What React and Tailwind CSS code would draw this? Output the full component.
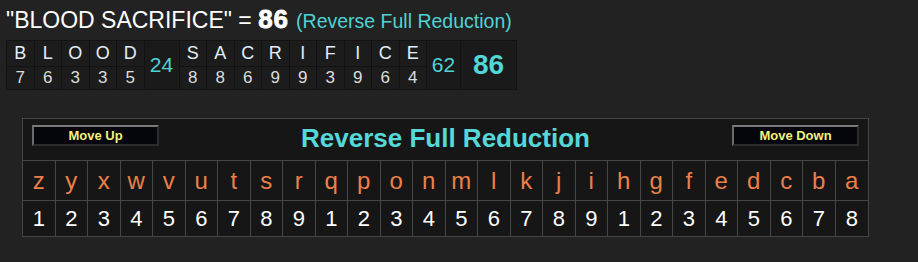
import React from "react";

const FONT = { fontFamily: '"Liberation Sans", Arial, sans-serif' };

const words = [
  { letters: [["B", 7], ["L", 6], ["O", 3], ["O", 3], ["D", 5]], total: 24 },
  {
    letters: [["S", 8], ["A", 8], ["C", 6], ["R", 9], ["I", 9], ["F", 3], ["I", 9], ["C", 6], ["E", 4]],
    total: 62,
  },
];

const cipher = "zyxwvutsrqponmlkjihgfedcba".split("");
const values = [1, 2, 3, 4, 5, 6, 7, 8, 9, 1, 2, 3, 4, 5, 6, 7, 8, 9, 1, 2, 3, 4, 5, 6, 7, 8];

function Breakdown() {
  return (
    <div className="ml-[6px] flex w-fit gap-px bg-[#121212] p-px">
      {words.map((w, wi) => (
        <React.Fragment key={wi}>
          {w.letters.map(([l, v], i) => (
            <div key={i} className="flex w-[26.5px] flex-col gap-px">
              <div className="flex h-[25px] items-center justify-center bg-[#1c1c1c] text-[18px] text-[#e2eefa]">
                {l}
              </div>
              <div className="flex h-[22px] items-center justify-center bg-[#1c1c1c] text-[17px] text-[#dcdcdc]">
                {v}
              </div>
            </div>
          ))}
          <div
            className={`flex ${wi === 0 ? "w-[34px]" : "w-[33px]"} items-center justify-center bg-[#1a1a1a] text-[21px] text-[#4fd3d3]`}
          >
            {w.total}
          </div>
        </React.Fragment>
      ))}
      <div className="flex w-[55px] items-center justify-center bg-[#1a1a1a] text-[28px] font-bold text-[#52d6d6]">
        86
      </div>
    </div>
  );
}

function MoveButton({ children }) {
  return (
    <button
      type="button"
      className="mt-[6px] flex h-[21px] w-[127px] items-center justify-center border-2 border-t-[#7a7a7a] border-l-[#6a6a6a] border-r-[#2c2c2c] border-b-[#2c2c2c] bg-[#05050c] text-[13px] font-bold text-[#f2f27c]"
    >
      {children}
    </button>
  );
}

function CipherTable() {
  return (
    <div className="ml-[22px] mt-[28px] w-[847px] border border-[#464646] bg-[#161616]">
      <div className="flex h-[42px] items-start border-b border-[#464646] px-[9px]">
        <MoveButton>Move Up</MoveButton>
        <div className="flex-1 pt-[3px] text-center text-[26px] font-bold leading-[32px] text-[#55d8d8]">
          Reverse Full Reduction
        </div>
        <MoveButton>Move Down</MoveButton>
      </div>
      <div className="grid grid-cols-[repeat(26,minmax(0,1fr))] border-b border-[#464646]">
        {cipher.map((c, i) => (
          <div
            key={i}
            className={`flex h-[39px] items-center justify-center text-[24px] text-[#ec8048] ${i < 25 ? "border-r border-[#464646]" : ""}`}
          >
            {c}
          </div>
        ))}
      </div>
      <div className="grid grid-cols-[repeat(26,minmax(0,1fr))]">
        {values.map((v, i) => (
          <div
            key={i}
            className={`flex h-[35px] items-center justify-center text-[22px] text-white ${i < 25 ? "border-r border-[#464646]" : ""}`}
          >
            {v}
          </div>
        ))}
      </div>
    </div>
  );
}

export default function App() {
  return (
    <div className="h-[262px] w-[918px] overflow-hidden bg-[#222222]" style={FONT}>
      <div className="flex h-[40px] items-baseline pl-[6px] pt-0 text-white">
        <span className="text-[23px]">"BLOOD SACRIFICE" =&nbsp;</span>
        <span className="text-[26px] font-bold tracking-[1px] [-webkit-text-stroke:0.8px_white]">86</span>
        <span className="ml-[7px] text-[19.5px] text-[#4fd3d3]">(Reverse Full Reduction)</span>
      </div>
      <Breakdown />
      <CipherTable />
    </div>
  );
}
